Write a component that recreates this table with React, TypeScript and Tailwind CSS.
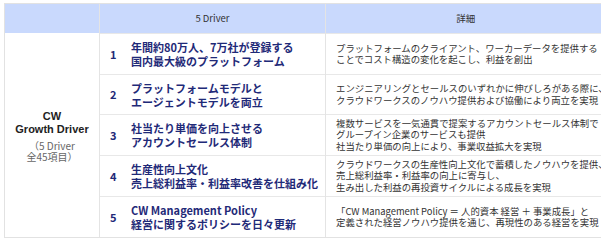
import React from "react";

const rows = [
  {
    n: "1",
    t: ["年間約80万人、7万社が登録する", "国内最大級のプラットフォーム"],
    d: ["プラットフォームのクライアント、ワーカーデータを提供する", "ことでコスト構造の変化を起こし、利益を創出"],
    h: "h-[41px]",
  },
  {
    n: "2",
    t: ["プラットフォームモデルと", "エージェントモデルを両立"],
    d: ["エンジニアリングとセールスのいずれかに伸びしろがある際に、", "クラウドワークスのノウハウ提供および協働により両立を実現"],
    h: "h-[40px]",
  },
  {
    n: "3",
    t: ["社当たり単価を向上させる", "アカウントセールス体制"],
    d: ["複数サービスを一気通貫で提案するアカウントセールス体制で", "グループイン企業のサービスも提供", "社当たり単価の向上により、事業収益拡大を実現"],
    h: "h-[41px]",
  },
  {
    n: "4",
    t: ["生産性向上文化", "売上総利益率・利益率改善を仕組み化"],
    d: ["クラウドワークスの生産性向上文化で蓄積したノウハウを提供、", "売上総利益率・利益率の向上に寄与し、", "生み出した利益の再投資サイクルによる成長を実現"],
    h: "h-[41px]",
  },
  {
    n: "5",
    t: ["CW Management Policy", "経営に関するポリシーを日々更新"],
    d: ["「CW Management Policy ＝ 人的資本 経営 ＋ 事業成長」と", "定義された経営ノウハウ提供を通じ、再現性のある経営を実現"],
    h: "h-[41px]",
  },
];

export default function App() {
  const jp = { fontFamily: '"Noto Sans CJK JP", "Noto Sans", sans-serif' };
  return (
    <div className="w-[601px] h-[240px] bg-white overflow-hidden pl-[4px] pt-[3px]" style={jp}>
      <div className="w-[600px] border-t border-l border-b border-[#e2e2e2] flex">
        {/* left column */}
        <div className="w-[95px] shrink-0 flex flex-col border-r border-[#e4e4e4]">
          <div className="h-[29px] bg-[#c9d9fd]" />
          <div className="flex-1 flex flex-col items-center justify-center text-center pt-[2px]">
            <div
              className="text-[11px] font-bold leading-[13px] text-[#222]"
              style={{ fontFamily: '"Liberation Sans", Arial, sans-serif' }}
            >
              <div>CW</div>
              <div>Growth Driver</div>
            </div>
            <div className="mt-[4px] text-[10px] leading-[11px] text-[#666]">
              <div>（5 Driver</div>
              <div>全45項目）</div>
            </div>
          </div>
        </div>
        {/* middle */}
        <div className="w-[226px] shrink-0 flex flex-col border-r border-[#e4e4e4]">
          <div className="h-[29px] bg-[#c9d9fd] flex items-center justify-center text-[9.5px] text-[#333]">
            5 Driver
          </div>
          {rows.map((r) => (
            <div key={r.n} className={`${r.h} flex items-center border-t border-[#e8e8e8] pl-[10px]`}>
              <div className="w-[21px] text-[11px] font-bold text-[#1f2a78]">{r.n}</div>
              <div className="text-[11px] font-bold leading-[14px] text-[#1f2a78] whitespace-nowrap">
                {r.t.map((l) => (
                  <div key={l}>{l}</div>
                ))}
              </div>
            </div>
          ))}
        </div>
        {/* right */}
        <div className="flex-1 flex flex-col">
          <div className="h-[29px] bg-[#c9d9fd] flex items-center justify-center text-[9.5px] text-[#333] pr-[2px]">
            詳細
          </div>
          {rows.map((r) => (
            <div key={r.n} className={`${r.h} flex items-center border-t border-[#e8e8e8] pl-[10px]`}>
              <div className="text-[9.4px] leading-[11.5px] text-[#333] whitespace-nowrap">
                {r.d.map((l) => (
                  <div key={l}>{l}</div>
                ))}
              </div>
            </div>
          ))}
        </div>
      </div>
    </div>
  );
}
